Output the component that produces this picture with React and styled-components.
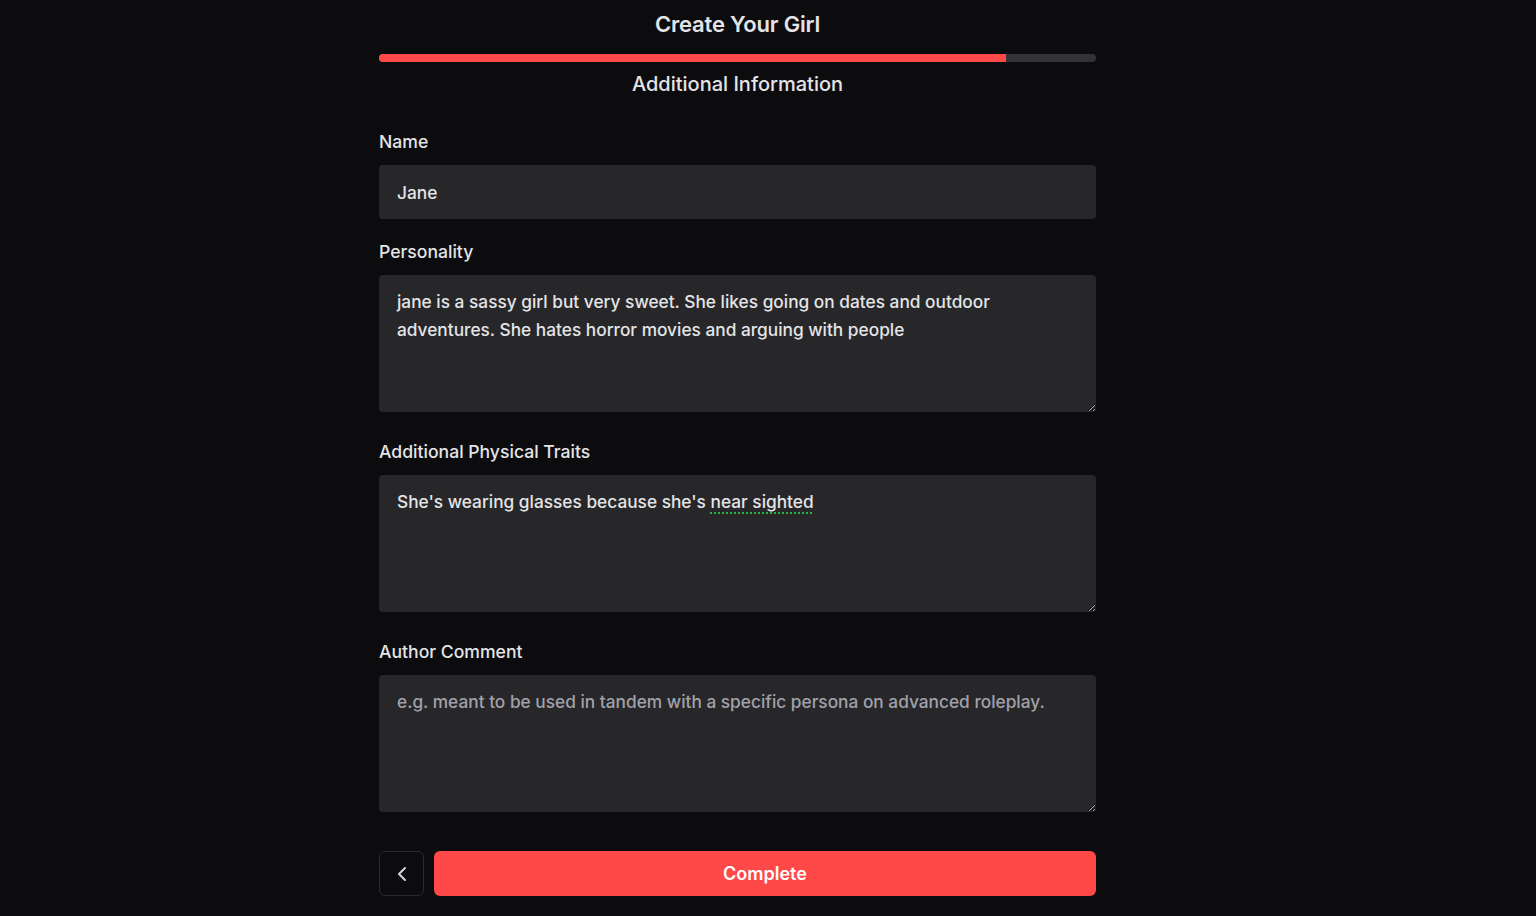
import React from "react";
import styled, { createGlobalStyle } from "styled-components";
import { ChevronLeft } from "lucide-react";

const GlobalStyle = createGlobalStyle`
  html, body {
    margin: 0;
    padding: 0;
    background: #0c0c0f;
  }
  body {
    font-family: Inter, "Noto Sans", sans-serif;
    color: #e4e4e7;
  }
  * { box-sizing: border-box; }
`;

const Page = styled.main`
  min-height: 916px;
  background: #0c0c0f;
  padding: 9px 0 20px 379px;
`;

const Form = styled.form`
  width: 717px;
  display: flex;
  flex-direction: column;
`;

const Title = styled.h1`
  margin: 0;
  height: 30px;
  line-height: 30px;
  font-size: 22px;
  font-weight: 600;
  text-align: center;
  color: #e4e4e7;
  letter-spacing: -0.2px;
`;

const Track = styled.div`
  margin-top: 15px;
  height: 8px;
  border-radius: 4px;
  background: #333336;
  overflow: hidden;
`;

const Fill = styled.div`
  height: 100%;
  background: #ff4848;
`;

const StepName = styled.h2`
  margin: 7px 0 0;
  line-height: 30px;
  font-size: 20px;
  font-weight: 500;
  text-align: center;
  color: #e4e4e7;
`;

const Field = styled.div`
  display: flex;
  flex-direction: column;
  margin-top: ${(p) => p.$top}px;
`;

const Label = styled.label`
  font-size: 17.6px;
  font-weight: 500;
  line-height: 24px;
  color: #e4e4e7;
  margin-bottom: 11px;
`;

const Input = styled.input`
  height: 54px;
  border: none;
  outline: none;
  border-radius: 4px;
  background: #27272a;
  color: #e4e4e7;
  font-family: inherit;
  font-size: 17.3px;
  font-weight: 500;
  padding: 0 18px;
`;

const AreaWrap = styled.div`
  position: relative;
`;

const TextArea = styled.textarea`
  display: block;
  width: 100%;
  height: 137px;
  border: none;
  outline: none;
  border-radius: 4px;
  background: #27272a;
  color: #e4e4e7;
  font-family: inherit;
  font-size: 17.3px;
  font-weight: 500;
  line-height: 28px;
  padding: 13px 18px;
  margin: 0;
  resize: vertical;

  &::placeholder {
    color: #a1a1aa;
  }
`;

/* mirrors the textarea text to draw the grammar-check dotted underline */
const SpellLayer = styled.div`
  position: absolute;
  inset: 0;
  padding: 13px 18px;
  font-size: 17.3px;
  font-weight: 500;
  line-height: 28px;
  color: transparent;
  pointer-events: none;
  white-space: pre-wrap;
`;

const Flagged = styled.span`
  text-decoration: underline dotted #2fae4a;
  text-decoration-thickness: 2px;
  text-underline-offset: 4px;
`;

const Actions = styled.div`
  display: flex;
  gap: 10px;
  margin-top: 39px;
`;

const BackButton = styled.button`
  width: 45px;
  height: 45px;
  flex: none;
  display: flex;
  align-items: center;
  justify-content: center;
  border: 1px solid #2a2a2e;
  border-radius: 6px;
  background: #0c0c0f;
  color: #d4d4d8;
  cursor: pointer;
  padding: 0;
`;

const SubmitButton = styled.button`
  flex: 1;
  height: 45px;
  border: none;
  border-radius: 6px;
  background: #ff4848;
  color: #ffffff;
  font-family: inherit;
  font-size: 18px;
  font-weight: 600;
  cursor: pointer;
`;

export default function App() {
  return (
    <>
      <GlobalStyle />
      <Page>
        <Form onSubmit={(e) => e.preventDefault()}>
          <Title>Create Your Girl</Title>
          <Track>
            <Fill style={{ width: "87.5%" }} />
          </Track>
          <StepName>Additional Information</StepName>

          <Field $top={31}>
            <Label htmlFor="name">Name</Label>
            <Input id="name" defaultValue="Jane" />
          </Field>

          <Field $top={21}>
            <Label htmlFor="personality">Personality</Label>
            <TextArea
              id="personality"
              spellCheck={false}
              defaultValue="jane is a sassy girl but very sweet. She likes going on dates and outdoor adventures. She hates horror movies and arguing with people"
            />
          </Field>

          <Field $top={28}>
            <Label htmlFor="traits">Additional Physical Traits</Label>
            <AreaWrap>
              <TextArea
                id="traits"
                spellCheck={false}
                defaultValue="She's wearing glasses because she's near sighted"
              />
              <SpellLayer aria-hidden="true">
                She's wearing glasses because she's <Flagged>near sighted</Flagged>
              </SpellLayer>
            </AreaWrap>
          </Field>

          <Field $top={28}>
            <Label htmlFor="comment">Author Comment</Label>
            <TextArea
              id="comment"
              placeholder="e.g. meant to be used in tandem with a specific persona on advanced roleplay."
            />
          </Field>

          <Actions>
            <BackButton type="button" aria-label="Back">
              <ChevronLeft size={24} strokeWidth={2} />
            </BackButton>
            <SubmitButton type="submit">Complete</SubmitButton>
          </Actions>
        </Form>
      </Page>
    </>
  );
}
